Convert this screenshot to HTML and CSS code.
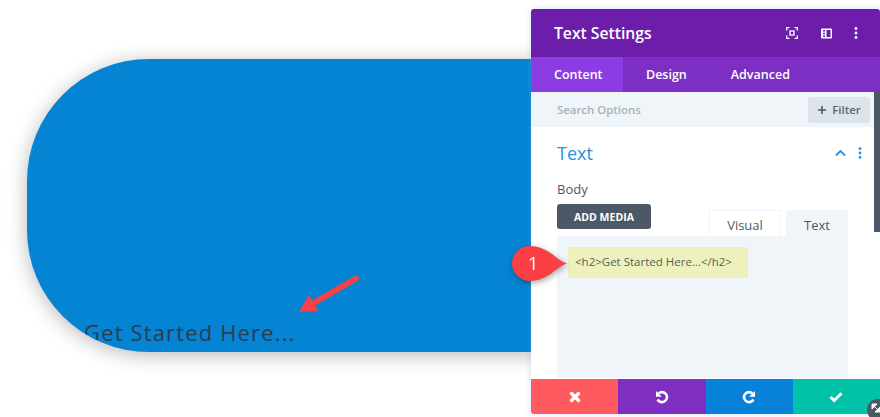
FILE: index.html
```html
<!DOCTYPE html>
<html lang="en">
<head>
    <meta charset="UTF-8">
    <meta name="viewport" content="width=device-width, initial-scale=1.0">
    <title>Text Settings</title>
    <link rel="stylesheet" href="styles.css">
</head>
<body>
    <div id="stage">
        <div class="hero">
            <h2 class="hero-title">Get Started Here...</h2>
        </div>

        <svg class="arrow" width="70" height="50" viewBox="0 0 70 50">
            <path d="M60 3.500 L16 29" fill="none" stroke="#fa3f45" stroke-width="5.500" stroke-linecap="round"/>
            <path d="M3 37 L13 20 L22 36 Z" fill="#fa3f45"/>
        </svg>

        <div class="panel">
            <div class="panel-head">
                <span class="panel-title">Text Settings</span>
                <div class="head-icons">
                    <svg class="focus-icon" width="12" height="12" viewBox="0 0 12 12" fill="none" stroke="#fff" stroke-width="1.300">
                        <path d="M0.700 3.500V0.700H3.500M8.500 0.700H11.300V3.500M11.300 8.500V11.300H8.500M3.500 11.300H0.700V8.500"/>
                        <rect x="4" y="4" width="4" height="4"/>
                    </svg>
                    <svg class="split-icon" width="11" height="11" viewBox="0 0 11 11">
                        <path fill="#fff" fill-rule="evenodd" d="M1 0.500H10a1 1 0 0 1 1 1V9.500a1 1 0 0 1-1 1H1a1 1 0 0 1-1-1V1.500a1 1 0 0 1 1-1ZM2 2V3.500H4V2ZM2 4.700V6.200H4V4.700ZM2 7.400V9H4V7.400ZM5.500 2V9H9.500V2Z"/>
                    </svg>
                    <svg width="4" height="12" viewBox="0 0 4 12" fill="#fff">
                        <circle cx="2" cy="1.500" r="1.400"/>
                        <circle cx="2" cy="6" r="1.400"/>
                        <circle cx="2" cy="10.500" r="1.400"/>
                    </svg>
                </div>
            </div>
            <div class="tabs">
                <span class="tab active">Content</span>
                <span class="tab">Design</span>
                <span class="tab">Advanced</span>
            </div>
            <div class="search">
                <span class="search-label">Search Options</span>
                <button class="filter">
                    <svg width="10" height="10" viewBox="0 0 10 10"><path d="M5 1V9M1 5H9" stroke="#4c5866" stroke-width="1.600"/></svg>
                    Filter
                </button>
            </div>
            <div class="body">
                <div class="group-head">
                    <span class="group-title">Text</span>
                    <div class="group-icons">
                        <svg width="11" height="8" viewBox="0 0 11 8" fill="none" stroke="#2b90dd" stroke-width="1.800">
                            <path d="M1 6.500L5.500 2L10 6.500"/>
                        </svg>
                        <svg width="4" height="12" viewBox="0 0 4 12" fill="#2b90dd">
                            <circle cx="2" cy="1.600" r="1.400"/>
                            <circle cx="2" cy="6" r="1.400"/>
                            <circle cx="2" cy="10.400" r="1.400"/>
                        </svg>
                    </div>
                </div>
                <div class="field-label">Body</div>
                <div class="editor-top">
                    <button class="add-media">ADD MEDIA</button>
                    <div class="editor-tabs">
                        <span class="editor-tab">Visual</span>
                        <span class="editor-tab current">Text</span>
                    </div>
                </div>
                <div class="editor">
                    <span class="code">&lt;h2&gt;Get Started Here...&lt;/h2&gt;</span>
                </div>
            </div>
            <div class="actions">
                <span class="action red">
                    <svg width="12" height="12" viewBox="0 0 12 12"><path d="M2.500 2.500L9.500 9.500M9.500 2.500L2.500 9.500" stroke="#fff" stroke-width="3.400" stroke-linecap="round"/></svg>
                </span>
                <span class="action purple">
                    <svg width="14" height="14" viewBox="0 0 14 14" fill="none"><path d="M3.600 3.400A5 5 0 1 1 2.600 9.500" stroke="#fff" stroke-width="2.600"/><path d="M1 1V6.800H6.800Z" fill="#fff"/></svg>
                </span>
                <span class="action blue">
                    <svg width="14" height="14" viewBox="0 0 14 14" fill="none"><path d="M10.400 3.400A5 5 0 1 0 11.400 9.500" stroke="#fff" stroke-width="2.600"/><path d="M13 1V6.800H7.200Z" fill="#fff"/></svg>
                </span>
                <span class="action green">
                    <svg width="14" height="12" viewBox="0 0 14 12" fill="none"><path d="M1.500 6L5.200 9.500L12.500 2.200" stroke="#fff" stroke-width="3"/></svg>
                </span>
            </div>
            <div class="scroll-strip"></div>
        </div>

        <div class="callout">
            <svg width="60" height="38" viewBox="0 0 60 38">
                <path d="M22 2C31 2 38 6 44 10C49 14 54 18 59 19.500C54 21 49 25 44 29C38 33 31 37 22 37A18 17.500 0 0 1 22 2Z" fill="#fa3f45"/>
            </svg>
            <span class="callout-num">1</span>
        </div>

        <div class="resize">
            <svg width="10" height="10" viewBox="0 0 10 10"><path d="M1 1H6L1 6ZM9 9H4L9 4ZM2 2L8 8" fill="#fff" stroke="#fff"/></svg>
        </div>
    </div>
</body>
</html>
```

FILE: styles.css
```css
html, body {
    margin: 0;
    height: 100%;
    overflow: hidden;
    background: #fff;
}

#stage {
    position: relative;
    width: 880px;
    height: 417px;
    padding: 59px 0 0 27px;
    box-sizing: border-box;
    font-family: "Open Sans", "Liberation Sans", sans-serif;
    overflow: hidden;
}

.hero {
    display: flex;
    align-items: flex-end;
    width: 640px;
    height: 293px;
    padding-left: 57px;
    box-sizing: border-box;
    background: #0584d4;
    border-radius: 122px;
    box-shadow: 0 3px 20px rgba(0, 0, 0, 0.28);
    overflow: hidden;
}

.hero-title {
    margin: 0 0 5px;
    font-size: 22px;
    font-weight: 400;
    line-height: 30px;
    letter-spacing: 1.150px;
    color: #2b3c4e;
}

.arrow {
    position: absolute;
    left: 296px;
    top: 275px;
}

.panel {
    position: absolute;
    left: 531px;
    top: 9px;
    display: flex;
    flex-direction: column;
    width: 349px;
    height: 405px;
    background: #fff;
    border-radius: 3px;
    box-shadow: 0 0 6px rgba(120, 170, 230, 0.35);
    overflow: hidden;
}

.panel-head {
    display: flex;
    align-items: center;
    justify-content: space-between;
    height: 48px;
    padding: 0 22px 0 23px;
    background: #6c1eab;
    flex: none;
}

.panel-title {
    font-size: 15.700px;
    font-weight: 600;
    color: #fff;
}

.head-icons {
    display: flex;
    align-items: center;
}

.focus-icon {
    margin-right: 23px;
}

.split-icon {
    margin-right: 22px;
}

.tabs {
    display: flex;
    height: 35px;
    background: #7d2fc4;
    flex: none;
}

.tab {
    font-size: 12.500px;
    font-weight: 600;
    line-height: 35px;
    color: #fff;
}

.tab.active {
    width: 92px;
    padding-left: 23px;
    box-sizing: border-box;
    background: #8c3ce3;
    margin-right: 23px;
}

.tab + .tab + .tab {
    margin-left: 44px;
}

.search {
    display: flex;
    align-items: center;
    justify-content: space-between;
    height: 35px;
    padding: 0 10px 0 26px;
    background: #f0f5f9;
    flex: none;
}

.search-label {
    font-size: 11.400px;
    font-weight: 600;
    color: #a5b1bd;
}

.filter {
    display: flex;
    align-items: center;
    justify-content: center;
    gap: 5px;
    width: 62px;
    height: 26px;
    padding: 0;
    border: 0;
    border-radius: 3px;
    background: #dde3ea;
    font-family: inherit;
    font-size: 11.500px;
    font-weight: 600;
    color: #5b6875;
}

.body {
    flex: 1;
    padding: 0 32px 0 26px;
}

.group-head {
    display: flex;
    align-items: center;
    justify-content: space-between;
    height: 52px;
    margin-right: -14px;
}

.group-title {
    font-size: 18px;
    color: #2b90dd;
}

.group-icons {
    display: flex;
    align-items: center;
    gap: 12px;
}

.field-label {
    margin-top: 1px;
    font-size: 13px;
    line-height: 18px;
    color: #4c5866;
}

.editor-top {
    display: flex;
    align-items: flex-start;
    justify-content: space-between;
    height: 32px;
    margin-top: 6px;
}

.add-media {
    width: 94px;
    height: 25px;
    padding: 0;
    border: 0;
    border-radius: 3px;
    background: #4c5866;
    font-family: inherit;
    font-size: 10.500px;
    font-weight: 700;
    color: #fff;
}

.editor-tabs {
    display: flex;
    gap: 5px;
    margin-top: 6px;
}

.editor-tab {
    height: 26px;
    width: 72px;
    font-size: 13px;
    line-height: 28px;
    text-align: center;
    color: #4c5866;
    background: #fff;
    border: 1px solid #f0f5f9;
    border-bottom: 0;
    box-sizing: border-box;
}

.editor-tab.current {
    width: 62px;
    background: #f0f5f9;
}

.editor {
    height: 142px;
    padding: 11px;
    box-sizing: border-box;
    background: #f0f5f9;
}

.code {
    display: block;
    width: 180px;
    height: 31px;
    padding-left: 7px;
    box-sizing: border-box;
    background: #eef1bc;
    font-size: 11.500px;
    font-weight: 400;
    line-height: 30px;
    color: #566259;
}

.actions {
    display: flex;
    height: 35px;
    flex: none;
}

.action {
    display: flex;
    align-items: center;
    justify-content: center;
    flex: 1;
}

.red { background: #ff5a5f; }
.purple { background: #7e2fc2; }
.blue { background: #0881d8; }
.green { background: #00c2a8; }

.scroll-strip {
    position: absolute;
    right: 0;
    top: 83px;
    width: 6px;
    height: 140px;
    background: #4c5866;
}

.callout {
    position: absolute;
    left: 508px;
    top: 244px;
    width: 60px;
    height: 38px;
    filter: drop-shadow(1px 2px 3px rgba(0, 0, 0, 0.35));
}

.callout-num {
    position: absolute;
    left: 20px;
    top: 7px;
    font-size: 18px;
    line-height: 24px;
    color: #fff;
}

.resize {
    position: absolute;
    left: 867px;
    top: 399px;
    display: flex;
    width: 22px;
    height: 22px;
    padding: 4px;
    box-sizing: border-box;
    background: #4c5866;
    border-radius: 50%;
}
```
